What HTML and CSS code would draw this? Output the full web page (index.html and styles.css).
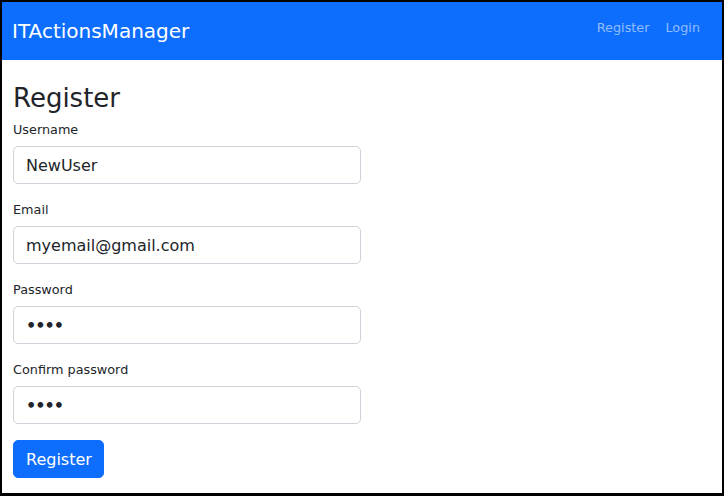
FILE: index.html
```html
<!DOCTYPE html>
<html lang="en">
<head>
<meta charset="utf-8">
<title>Register - ITActionsManager</title>
<link rel="stylesheet" href="styles.css">
</head>
<body>
<div class="frame">
  <nav class="navbar">
    <a class="brand" href="#">ITActionsManager</a>
    <ul class="nav-links">
      <li><a class="nav-link" href="#">Register</a></li>
      <li><a class="nav-link" href="#">Login</a></li>
    </ul>
  </nav>
  <main class="content">
    <h1 class="page-title">Register</h1>
    <form class="form">
      <div class="field">
        <label class="label" for="username">Username</label>
        <input class="input" id="username" type="text" value="NewUser">
      </div>
      <div class="field">
        <label class="label" for="email">Email</label>
        <input class="input" id="email" type="email" value="myemail@gmail.com">
      </div>
      <div class="field">
        <label class="label" for="password">Password</label>
        <input class="input input-secret" id="password" type="password" value="1234">
      </div>
      <div class="field">
        <label class="label" for="confirm">Confirm password</label>
        <input class="input input-secret" id="confirm" type="password" value="1234">
      </div>
      <button class="btn" type="button">Register</button>
    </form>
  </main>
</div>
</body>
</html>
```

FILE: styles.css
```css
* { box-sizing: border-box; }
html, body { margin: 0; padding: 0; }
body {
  font-family: "DejaVu Sans", Verdana, sans-serif;
  color: #212529;
  background: #fff;
}
.frame {
  width: 724px;
  height: 496px;
  border: 2px solid #000;
  border-bottom-width: 3px;
  overflow: hidden;
}
.navbar {
  height: 58px;
  background: #0d6efd;
  display: flex;
  align-items: center;
  justify-content: space-between;
  padding: 0 14px 0 10px;
}
.brand {
  color: #fff;
  font-size: 20px;
  line-height: 30px;
  text-decoration: none;
}
.nav-links {
  list-style: none;
  margin: 0 0 7px 0;
  padding: 0;
  display: flex;
}
.nav-link {
  display: block;
  padding: 0 8px;
  font-size: 12.8px;
  line-height: 19px;
  color: rgba(255, 255, 255, 0.55);
  text-decoration: none;
}
.content {
  padding: 23px 11px 0 11px;
}
.page-title {
  margin: 0 0 6px 0;
  font-size: 26px;
  font-weight: 400;
  line-height: 31px;
}
.form {
  display: flex;
  flex-direction: column;
  align-items: flex-start;
}
.field {
  display: flex;
  flex-direction: column;
  margin-bottom: 16px;
}
.label {
  font-size: 12.8px;
  line-height: 19px;
  margin-bottom: 7px;
}
.input {
  width: 348px;
  height: 38px;
  padding: 6px 12px;
  font-family: inherit;
  font-size: 16px;
  color: #212529;
  background: #fff;
  border: 1px solid #ced4da;
  border-radius: 5px;
  outline: none;
}
.input-secret {
  letter-spacing: -1px;
  font-weight: 700;
}
.btn {
  height: 38px;
  padding: 7px 11px 5px 12px;
  font-family: inherit;
  font-size: 16px;
  line-height: 24px;
  color: #fff;
  background: #0d6efd;
  border: 1px solid #0d6efd;
  border-radius: 5px;
}
```
